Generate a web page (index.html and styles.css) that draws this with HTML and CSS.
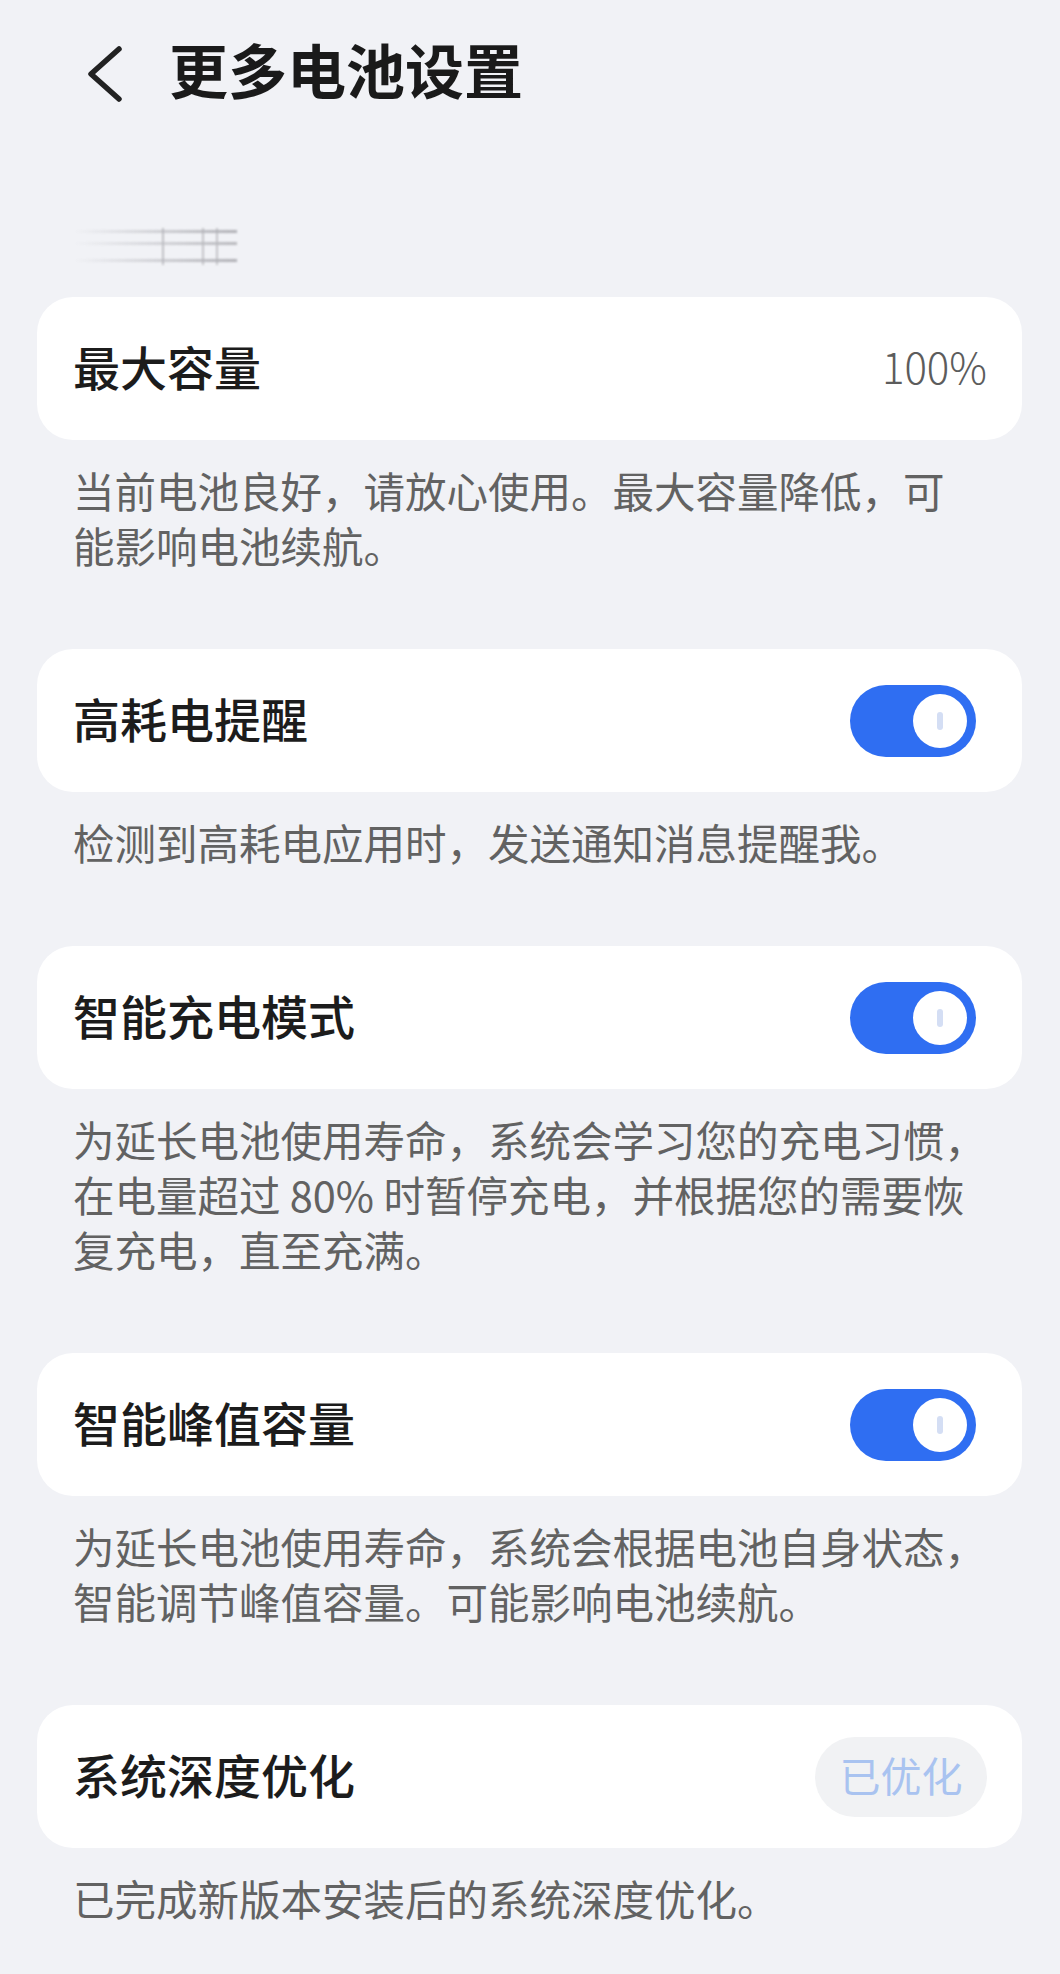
FILE: index.html
```html
<html lang="zh-CN">
<head>
  <meta charset="UTF-8">
  <meta name="viewport" content="width=device-width, initial-scale=1.0">
  <title>更多电池设置</title>
  <link rel="stylesheet" href="styles.css">
</head>
<body>

<!-- Header -->
<div class="header">
  <svg class="back-icon" width="40" height="60" viewBox="0 0 40 60">
    <polyline points="34,6 6,31 34,56" fill="none" stroke="#222" stroke-width="5.5" stroke-linecap="round" stroke-linejoin="round"/>
  </svg>
  <div class="page-title">更多电池设置</div>
</div>

<!-- Blurred section label -->
<div class="section-label">
  <div class="blur-mark"></div>
</div>

<!-- Max capacity -->
<div class="card">
  <div class="card-title">最大容量</div>
  <div class="card-value">100%</div>
</div>
<div class="desc">当前电池良好，请放心使用。最大容量降低，可<br>能影响电池续航。</div>

<!-- High power alert -->
<div class="card">
  <div class="card-title">高耗电提醒</div>
  <div class="switch on"><span class="knob"><i></i></span></div>
</div>
<div class="desc">检测到高耗电应用时，发送通知消息提醒我。</div>

<!-- Smart charging -->
<div class="card">
  <div class="card-title">智能充电模式</div>
  <div class="switch on"><span class="knob"><i></i></span></div>
</div>
<div class="desc">为延长电池使用寿命，系统会学习您的充电习惯，<br>在电量超过 80% 时暂停充电，并根据您的需要恢<br>复充电，直至充满。</div>

<!-- Smart peak capacity -->
<div class="card">
  <div class="card-title">智能峰值容量</div>
  <div class="switch on"><span class="knob"><i></i></span></div>
</div>
<div class="desc">为延长电池使用寿命，系统会根据电池自身状态，<br>智能调节峰值容量。可能影响电池续航。</div>

<!-- Deep optimisation -->
<div class="card">
  <div class="card-title">系统深度优化</div>
  <button class="done-button" disabled>已优化</button>
</div>
<div class="desc">已完成新版本安装后的系统深度优化。</div>

</body>
</html>
```

FILE: styles.css
```css
body {
  margin: 0;
  background-color: #f1f2f6;
  font-family: "Noto Sans CJK SC", "Noto Sans", sans-serif;
}

/* Header */
.header {
  height: 144px;
  display: flex;
  align-items: center;
  padding-left: 85px;
}

.back-icon {
  display: block;
  margin-top: 2px;
}

.page-title {
  margin-left: 44px;
  margin-bottom: 8px;
  font-size: 59px;
  font-weight: bold;
  color: #1a1a1a;
  line-height: 1;
}

/* Blurred label under header */
.section-label {
  padding: 84px 0 32px 74px;
}

.blur-mark {
  width: 163px;
  height: 37px;
  filter: blur(1.2px);
  opacity: 0.75;
  background:
    linear-gradient(to right, rgba(160,160,165,0), #9a9aa0) 0 2px / 100% 3px no-repeat,
    linear-gradient(to right, rgba(160,160,165,0), #a5a5aa) 0 14px / 100% 3px no-repeat,
    linear-gradient(to right, rgba(160,160,165,0), #9a9aa0) 0 31px / 100% 3px no-repeat,
    linear-gradient(#b0b0b5, #b0b0b5) 88px 0 / 2px 100% no-repeat,
    linear-gradient(#b5b5ba, #b5b5ba) 128px 0 / 2px 100% no-repeat,
    linear-gradient(#b5b5ba, #b5b5ba) 142px 0 / 2px 100% no-repeat;
}

/* Cards */
.card {
  margin: 0 38px 0 37px;
  height: 143px;
  padding: 0 35px 0 36px;
  background-color: #fff;
  border-radius: 36px;
  display: flex;
  justify-content: space-between;
  align-items: center;
}

.card-title {
  padding-bottom: 7px;
  font-size: 47px;
  font-weight: 500;
  color: #1c1c1c;
}

.card-value {
  padding-bottom: 7px;
  font-size: 42px;
  font-weight: 300;
  color: #5c5c5c;
}

/* Toggle switch */
.switch {
  width: 126px;
  height: 72px;
  border-radius: 36px;
  background-color: #ccc;
  margin-right: 11px;
  position: relative;
}

.switch.on {
  background-color: #2f6ef2;
}

.switch .knob {
  position: absolute;
  top: 9px;
  right: 9px;
  width: 54px;
  height: 54px;
  border-radius: 50%;
  background-color: #fff;
  display: flex;
  justify-content: center;
  align-items: center;
}

.switch .knob i {
  width: 6px;
  height: 18px;
  border-radius: 3px;
  background-color: #d4def4;
}

/* Optimised pill */
.done-button {
  width: 172px;
  height: 80px;
  border: none;
  border-radius: 40px;
  background-color: #f1f2f4;
  color: #a9c3f0;
  font-family: "Noto Sans CJK SC", sans-serif;
  font-size: 41px;
  padding: 0 0 6px;
}

/* Descriptions */
.desc {
  padding: 23px 40px 76px 73px;
  font-size: 41.5px;
  line-height: 55px;
  color: #626262;
}
```
